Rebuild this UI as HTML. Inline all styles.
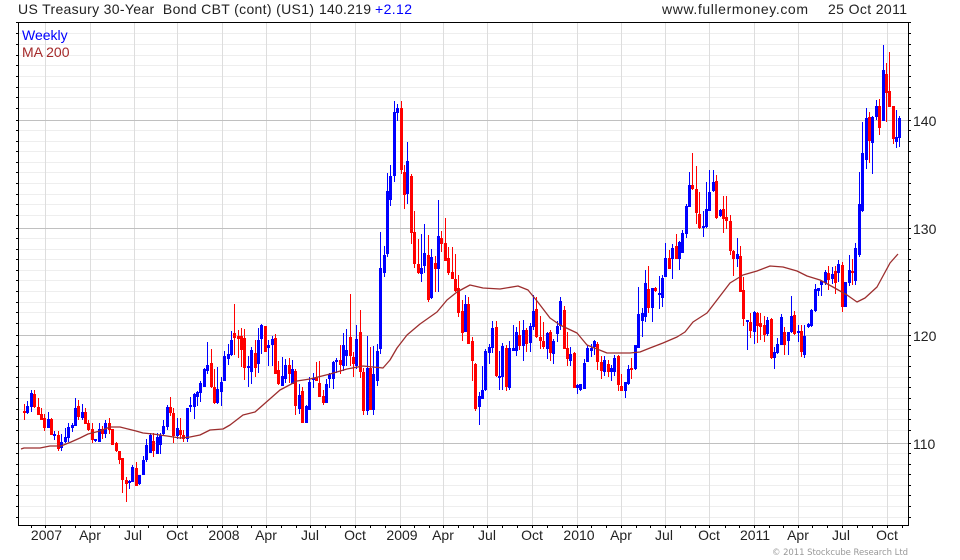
<!DOCTYPE html>
<html>
<head>
<meta charset="utf-8">
<style>
html,body{margin:0;padding:0;background:#fff;width:960px;height:560px;overflow:hidden}
svg{display:block}
text{font-family:"Liberation Sans",Arial,sans-serif;font-size:14px;fill:#222;white-space:pre}
.x{text-anchor:middle}
</style>
</head>
<body>
<svg width="960" height="560" viewBox="0 0 960 560" xmlns="http://www.w3.org/2000/svg">
<rect width="960" height="560" fill="#fff"/>
<g shape-rendering="crispEdges" fill="none">
<path stroke="#eeeeee" d="M19 33.5H908M19 44.5H908M19 55.5H908M19 65.5H908M19 76.5H908M19 87.5H908M19 97.5H908M19 108.5H908M19 130.5H908M19 141.5H908M19 151.5H908M19 162.5H908M19 172.5H908M19 183.5H908M19 194.5H908M19 204.5H908M19 215.5H908M19 238.5H908M19 249.5H908M19 259.5H908M19 270.5H908M19 280.5H908M19 291.5H908M19 302.5H908M19 312.5H908M19 323.5H908M19 345.5H908M19 356.5H908M19 366.5H908M19 377.5H908M19 387.5H908M19 398.5H908M19 409.5H908M19 419.5H908M19 430.5H908M19 453.5H908M19 464.5H908M19 474.5H908M19 485.5H908M19 495.5H908M19 506.5H908M19 517.5H908"/>
<path stroke="#dddddd" d="M45.5 23V525M90.5 23V525M134.5 23V525M177.5 23V525M222.5 23V525M266.5 23V525M310.5 23V525M355.5 23V525M400.5 23V525M443.5 23V525M487.5 23V525M532.5 23V525M577.5 23V525M621.5 23V525M665.5 23V525M709.5 23V525M754.5 23V525M798.5 23V525M842.5 23V525M887.5 23V525"/>
<path stroke="#c0c0c0" d="M19 120.5H908M19 228.5H908M19 335.5H908M19 443.5H908"/>
<path stroke="#0000ff" d="M27.5 401V414M31.5 390V412M48.5 412V428M54.5 431V440M61.5 434V451M65.5 428V443M68.5 423V442M72.5 423V432M75.5 398V426M82.5 404V420M95.5 439V442M99.5 423V442M105.5 420V438M129.5 480V489M132.5 465V482M139.5 475V485M143.5 456V475M146.5 439V462M150.5 433V453M157.5 433V454M160.5 433V454M163.5 420V435M167.5 405V430M177.5 418V439M187.5 408V442M190.5 397V412M194.5 393V419M197.5 391V406M200.5 381V402M204.5 368V387M207.5 342V374M217.5 367V404M221.5 377V406M224.5 351V381M228.5 344V365M231.5 331V356M248.5 356V387M251.5 347V384M258.5 328V373M261.5 324V354M268.5 340V366M272.5 336V366M282.5 357V386M285.5 359V383M292.5 360V384M299.5 384V414M306.5 405V423M309.5 377V410M313.5 373V388M326.5 379V403M329.5 373V388M333.5 361V389M336.5 358V373M343.5 333V371M346.5 329V366M356.5 325V369M367.5 336V415M373.5 346V415M377.5 344V386M380.5 232V354M384.5 246V277M387.5 173V257M390.5 165V206M394.5 101V182M397.5 104V121M407.5 142V204M421.5 234V282M424.5 224V273M431.5 249V299M438.5 200V292M465.5 295V332M479.5 392V425M482.5 366V399M485.5 349V391M489.5 344V364M492.5 321V353M499.5 351V390M502.5 343V390M509.5 341V390M513.5 325V351M516.5 327V356M523.5 320V361M530.5 323V352M533.5 295V330M547.5 332V359M553.5 339V364M557.5 321V342M560.5 297V330M570.5 347V366M577.5 384V394M580.5 384V391M584.5 359V389M587.5 345V362M591.5 344V357M594.5 340V355M604.5 356V376M611.5 365V381M614.5 355V376M625.5 382V398M628.5 365V385M635.5 345V370M638.5 287V348M642.5 308V337M645.5 270V322M652.5 288V322M659.5 276V309M662.5 275V307M665.5 243V277M672.5 244V279M679.5 241V270M682.5 230V253M686.5 204V238M689.5 172V207M703.5 211V237M706.5 182V228M709.5 170V211M713.5 170V192M720.5 209V217M737.5 238V267M747.5 320V350M754.5 311V344M767.5 317V336M774.5 347V369M777.5 338V354M781.5 314V345M788.5 332V355M791.5 296V333M798.5 325V342M804.5 325V358M808.5 323V328M811.5 309V327M815.5 284V312M818.5 288V296M821.5 280V296M825.5 270V285M832.5 267V284M838.5 260V282M845.5 282V307M849.5 255V286M855.5 243V285M859.5 172V257M862.5 122V212M866.5 108V169M872.5 116V174M876.5 100V120M883.5 45V121M896.5 110V148M899.5 116V147"/>
<path stroke="#0000ff" stroke-width="3" d="M27.5 406V413M31.5 393V407M48.5 419V428M54.5 434V436M61.5 442V448M65.5 437V442M68.5 427V438M72.5 425V428M75.5 408V426M82.5 412V418M95.5 439V441M99.5 429V442M105.5 423V434M129.5 481V483M132.5 467V482M139.5 475V484M143.5 460V475M146.5 445V460M150.5 435V453M157.5 437V454M160.5 435V445M163.5 426V434M167.5 407V427M177.5 428V436M187.5 408V439M190.5 405V407M194.5 394V407M197.5 392V397M200.5 383V393M204.5 369V387M207.5 365V371M217.5 389V403M221.5 382V392M224.5 356V381M228.5 354V359M231.5 340V355M248.5 366V368M251.5 350V372M258.5 340V364M261.5 325V339M268.5 345V348M272.5 339V345M282.5 376V386M285.5 365V379M292.5 369V384M299.5 395V409M306.5 406V423M309.5 382V410M313.5 378V380M326.5 384V403M329.5 374V379M333.5 362V379M336.5 360V362M343.5 345V366M346.5 350V356M356.5 339V366M367.5 368V411M373.5 374V410M377.5 351V381M380.5 268V349M384.5 255V273M387.5 191V254M390.5 176V200M394.5 112V176M397.5 108V113M407.5 161V194M421.5 268V274M424.5 253V266M431.5 257V298M438.5 236V269M465.5 304V332M479.5 396V407M482.5 390V399M485.5 351V390M489.5 347V353M492.5 328V348M499.5 376V378M502.5 346V377M509.5 348V388M513.5 348V351M516.5 332V351M523.5 330V346M530.5 326V343M533.5 311V327M547.5 333V349M553.5 341V354M557.5 326V334M560.5 301V326M570.5 354V361M577.5 385V388M580.5 384V390M584.5 363V389M587.5 348V362M591.5 348V351M594.5 341V347M604.5 360V372M611.5 368V372M614.5 358V372M625.5 382V391M628.5 369V384M635.5 345V369M638.5 314V348M642.5 313V321M645.5 283V317M652.5 288V308M659.5 293V295M662.5 278V298M665.5 258V277M672.5 248V259M679.5 242V259M682.5 233V253M686.5 206V234M689.5 185V207M703.5 226V228M706.5 209V227M709.5 192V211M713.5 182V191M720.5 210V216M737.5 254V259M747.5 320V322M754.5 312V332M767.5 320V334M774.5 352V358M777.5 344V353M781.5 317V345M788.5 332V341M791.5 316V332M798.5 331V333M804.5 336V355M808.5 324V327M811.5 310V326M815.5 289V311M818.5 288V291M821.5 281V285M825.5 272V283M832.5 274V279M838.5 264V273M845.5 282V307M849.5 270V283M855.5 248V281M859.5 204V255M862.5 153V211M866.5 118V160M872.5 117V143M876.5 106V117M883.5 70V121M896.5 137V142M899.5 118V138"/>
<path stroke="#ff0000" d="M24.5 404V420M34.5 390V408M38.5 398V415M41.5 408V420M44.5 414V431M51.5 418V435M58.5 431V451M78.5 400V420M85.5 408V424M88.5 420V431M92.5 423V443M102.5 426V439M109.5 418V434M112.5 429V445M116.5 442V452M119.5 451V464M122.5 458V493M126.5 477V502M136.5 462V486M153.5 433V457M170.5 397V416M173.5 408V443M180.5 418V439M183.5 430V442M211.5 349V388M214.5 369V404M234.5 304V355M238.5 330V358M241.5 328V367M244.5 329V380M255.5 340V377M265.5 326V352M275.5 334V374M278.5 361V385M289.5 358V383M295.5 369V415M302.5 387V423M316.5 362V381M319.5 361V397M323.5 390V405M340.5 345V374M350.5 294V366M353.5 352V377M360.5 310V378M363.5 368V415M370.5 347V410M401.5 101V174M404.5 165V209M411.5 174V244M414.5 211V268M418.5 239V274M428.5 235V302M435.5 256V292M441.5 231V252M445.5 218V261M448.5 247V275M452.5 247V279M455.5 254V292M458.5 275V317M462.5 300V341M468.5 297V344M472.5 337V381M475.5 363V411M496.5 321V377M506.5 345V391M519.5 321V350M526.5 328V352M536.5 297V338M540.5 316V349M543.5 322V349M550.5 330V361M564.5 306V349M567.5 332V366M574.5 352V388M597.5 342V370M601.5 356V379M608.5 360V377M618.5 355V391M621.5 374V391M631.5 358V379M648.5 266V313M655.5 287V292M669.5 250V269M676.5 234V259M692.5 153V190M696.5 166V224M699.5 192V229M716.5 175V219M723.5 196V233M726.5 196V229M730.5 215V255M733.5 250V276M740.5 246V292M743.5 277V326M750.5 313V338M757.5 312V343M760.5 313V340M764.5 316V342M771.5 318V359M784.5 327V355M794.5 311V335M801.5 325V357M828.5 266V290M835.5 266V294M842.5 262V312M852.5 259V285M869.5 112V163M879.5 99V135M886.5 63V122M889.5 52V107M893.5 106V144"/>
<path stroke="#ff0000" stroke-width="3" d="M24.5 411V413M34.5 394V407M38.5 407V415M41.5 414V420M44.5 418V428M51.5 419V435M58.5 435V449M78.5 406V417M85.5 412V424M88.5 423V430M92.5 429V440M102.5 429V434M109.5 423V430M112.5 429V445M116.5 443V451M119.5 451V460M122.5 458V480M126.5 480V484M136.5 468V486M153.5 441V451M170.5 407V413M173.5 413V436M180.5 430V435M183.5 435V439M211.5 363V387M214.5 387V403M234.5 333V338M238.5 336V339M241.5 336V350M244.5 338V368M255.5 353V368M265.5 326V352M275.5 338V374M278.5 370V384M289.5 365V374M295.5 371V406M302.5 391V423M316.5 377V381M319.5 383V397M323.5 396V403M340.5 360V365M350.5 337V356M353.5 357V364M360.5 332V372M363.5 372V411M370.5 368V410M401.5 108V170M404.5 172V195M411.5 176V233M414.5 232V264M418.5 264V273M428.5 255V300M435.5 263V269M441.5 238V244M445.5 243V261M448.5 258V273M452.5 272V279M455.5 279V291M458.5 288V313M462.5 311V333M468.5 304V344M472.5 341V361M475.5 364V409M496.5 327V376M506.5 348V387M519.5 335V346M526.5 330V344M536.5 309V337M540.5 337V341M543.5 341V347M550.5 332V353M564.5 310V349M567.5 348V359M574.5 353V388M597.5 344V362M601.5 362V371M608.5 364V372M618.5 356V385M621.5 386V391M631.5 368V370M648.5 289V308M655.5 288V291M669.5 258V269M676.5 246V259M692.5 185V189M696.5 189V213M699.5 214V228M716.5 181V218M723.5 209V219M726.5 217V221M730.5 221V251M733.5 251V259M740.5 256V292M743.5 290V319M750.5 322V331M757.5 313V326M760.5 323V327M764.5 325V335M771.5 319V358M784.5 332V345M794.5 315V334M801.5 331V352M828.5 273V280M835.5 271V283M842.5 265V307M852.5 271V273M869.5 117V141M879.5 106V128M886.5 74V93M889.5 91V107M893.5 106V139"/>
<path stroke="#000" d="M18.5 22V526M18 22.5H909M18 525.5H909M908.5 22V526"/>
<path stroke="#000" d="M16 22.5H18M16 33.5H18M16 44.5H18M16 55.5H18M16 65.5H18M16 76.5H18M16 87.5H18M16 97.5H18M16 108.5H18M16 120.5H18M16 130.5H18M16 141.5H18M16 151.5H18M16 162.5H18M16 172.5H18M16 183.5H18M16 194.5H18M16 204.5H18M16 215.5H18M16 228.5H18M16 238.5H18M16 249.5H18M16 259.5H18M16 270.5H18M16 280.5H18M16 291.5H18M16 302.5H18M16 312.5H18M16 323.5H18M16 335.5H18M16 345.5H18M16 356.5H18M16 366.5H18M16 377.5H18M16 387.5H18M16 398.5H18M16 409.5H18M16 419.5H18M16 430.5H18M16 443.5H18M16 453.5H18M16 464.5H18M16 474.5H18M16 485.5H18M16 495.5H18M16 506.5H18M16 517.5H18"/>
<path stroke="#000" d="M909 22.5H911M909 33.5H911M909 44.5H911M909 55.5H911M909 65.5H911M909 76.5H911M909 87.5H911M909 97.5H911M909 108.5H911M909 120.5H911M909 130.5H911M909 141.5H911M909 151.5H911M909 162.5H911M909 172.5H911M909 183.5H911M909 194.5H911M909 204.5H911M909 215.5H911M909 228.5H911M909 238.5H911M909 249.5H911M909 259.5H911M909 270.5H911M909 280.5H911M909 291.5H911M909 302.5H911M909 312.5H911M909 323.5H911M909 335.5H911M909 345.5H911M909 356.5H911M909 366.5H911M909 377.5H911M909 387.5H911M909 398.5H911M909 409.5H911M909 419.5H911M909 430.5H911M909 443.5H911M909 453.5H911M909 464.5H911M909 474.5H911M909 485.5H911M909 495.5H911M909 506.5H911M909 517.5H911"/>
<path stroke="#000" d="M31.5 526V528M45.5 526V528M60.5 526V528M75.5 526V528M90.5 526V528M104.5 526V528M119.5 526V528M134.5 526V528M148.5 526V528M163.5 526V528M177.5 526V528M192.5 526V528M207.5 526V528M222.5 526V528M237.5 526V528M251.5 526V528M266.5 526V528M281.5 526V528M296.5 526V528M310.5 526V528M325.5 526V528M340.5 526V528M355.5 526V528M370.5 526V528M385.5 526V528M400.5 526V528M414.5 526V528M429.5 526V528M443.5 526V528M458.5 526V528M473.5 526V528M487.5 526V528M502.5 526V528M517.5 526V528M532.5 526V528M547.5 526V528M562.5 526V528M577.5 526V528M591.5 526V528M606.5 526V528M621.5 526V528M636.5 526V528M650.5 526V528M665.5 526V528M680.5 526V528M695.5 526V528M709.5 526V528M725.5 526V528M739.5 526V528M754.5 526V528M769.5 526V528M783.5 526V528M798.5 526V528M812.5 526V528M827.5 526V528M842.5 526V528M857.5 526V528M872.5 526V528M887.5 526V528M902.5 526V528"/>
</g>
<polyline fill="none" stroke="#9c2e2e" stroke-width="1.3" stroke-linejoin="round" points="21,449 24,448 40,448 50,446 61,446 71,442 80,438 88,434 100,431 110,427 120,427 128,429 136,431 143,433 153,434 167,436 180,438 190,437 200,435 210,430 223,429 230,425 243,415 255,412 263,405 280,390 297,381 310,379 330,374 347,369 363,366 383,368 390,360 397,348 407,335 420,324 437,312 447,300 457,292 470,285 483,288 500,289 518,286 528,290 537,301 550,318 560,325 577,333 587,345 607,353 630,353 640,352 650,348 663,343 677,337 685,332 693,322 707,313 717,300 730,283 743,275 757,271 770,266 783,267 797,271 807,276 820,280 833,287 847,295 857,302 865,298 877,287 890,263 898,254"/>
<text x="18" y="14" textLength="296" lengthAdjust="spacing">US Treasury 30-Year  Bond CBT (cont) (US1)</text>
<text x="319" y="14" textLength="52" lengthAdjust="spacing">140.219</text>
<text x="375" y="14" textLength="37" lengthAdjust="spacing" style="fill:#0000ff">+2.12</text>
<text x="662" y="14" textLength="146" lengthAdjust="spacing">www.fullermoney.com</text>
<text x="828" y="14" textLength="79" lengthAdjust="spacing">25 Oct 2011</text>
<text x="22" y="40" style="fill:#0000ff">Weekly</text>
<text x="22" y="57" style="fill:#a52a2a">MA 200</text>
<text x="913" y="126">140</text>
<text x="913" y="234">130</text>
<text x="913" y="341">120</text>
<text x="913" y="449">110</text>
<text class="x" x="46.5" y="540">2007</text>
<text class="x" x="90" y="540">Apr</text>
<text class="x" x="133" y="540">Jul</text>
<text class="x" x="177" y="540">Oct</text>
<text class="x" x="224" y="540">2008</text>
<text class="x" x="266" y="540">Apr</text>
<text class="x" x="310" y="540">Jul</text>
<text class="x" x="355" y="540">Oct</text>
<text class="x" x="402" y="540">2009</text>
<text class="x" x="443" y="540">Apr</text>
<text class="x" x="487" y="540">Jul</text>
<text class="x" x="532" y="540">Oct</text>
<text class="x" x="579" y="540">2010</text>
<text class="x" x="621" y="540">Apr</text>
<text class="x" x="664" y="540">Jul</text>
<text class="x" x="709" y="540">Oct</text>
<text class="x" x="755" y="540">2011</text>
<text class="x" x="798" y="540">Apr</text>
<text class="x" x="841" y="540">Jul</text>
<text class="x" x="887" y="540">Oct</text>
<text x="772" y="555" style="font-family:'DejaVu Sans',sans-serif;font-size:8.5px;fill:#999" textLength="136" lengthAdjust="spacing">© 2011 Stockcube Research Ltd</text>
</svg>
</body>
</html>
